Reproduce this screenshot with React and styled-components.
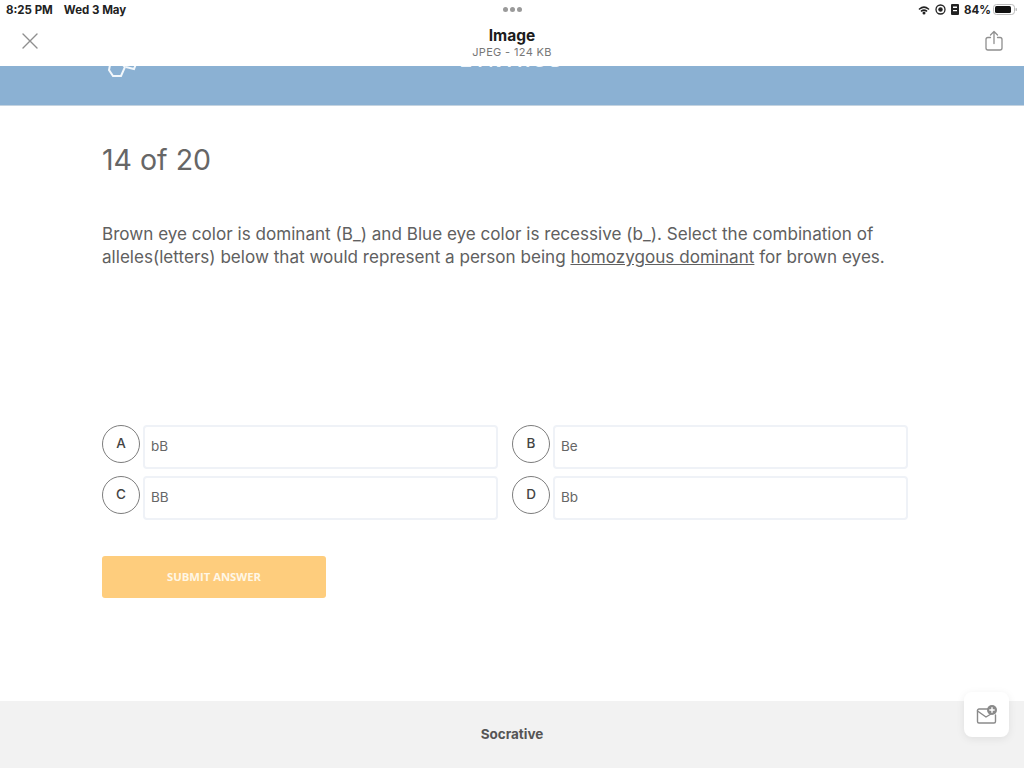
import React from "react";
import styled, { createGlobalStyle } from "styled-components";

const Global = createGlobalStyle`
  html, body { margin: 0; padding: 0; background: #fff; }
  body { font-family: "Liberation Sans", Arial, sans-serif; }
  * { box-sizing: border-box; }
`;
const Page = styled.div`
  width: 1024px; height: 768px; overflow: hidden; position: relative;
  display: flex; flex-direction: column; background: #fff;
`;
const TopChrome = styled.header`
  height: 66px; flex: none; display: flex; flex-direction: column; background: #fff;
`;
const StatusBar = styled.div`
  height: 19px; display: grid; grid-template-columns: 1fr auto 1fr; align-items: center;
  padding: 0 6px; font-size: 11.5px; font-weight: 700; color: #222;
  font-family: Inter, "Liberation Sans", sans-serif;
`;
const StatusLeft = styled.div`display: flex; gap: 11px; white-space: nowrap;`;
const StatusRight = styled.div`
  display: flex; justify-content: flex-end; align-items: center; gap: 5px;
`;
const Dots = styled.div`display: flex; gap: 2px;`;
const Dot = styled.span`width: 5px; height: 5px; border-radius: 50%; background: #9a9a9a;`;
const NavBar = styled.div`
  flex: 1; display: flex; align-items: center; justify-content: space-between; padding: 0 21px 4px 21px;
`;
const NavTitle = styled.div`
  display: flex; flex-direction: column; align-items: center; margin-top: 4px;
`;
const TitleMain = styled.div`
  font: 700 15.5px/18px Inter, "Liberation Sans", sans-serif; color: #1c1c1c;
`;
const TitleSub = styled.div`
  font: 400 11px/14px Inter, "Liberation Sans", sans-serif; color: #777; letter-spacing: .35px;
`;
const Banner = styled.div`
  height: 40px; flex: none; background: #8bb1d3; position: relative; overflow: hidden;
  border-bottom: 1px solid #c4d3e0;
`;
const BannerLogo = styled.svg`position: absolute; left: 107px; top: -5px;`;
const BannerText = styled.div`
  position: absolute; left: 0; right: 0; top: -15px; text-align: center; color: #eef5fb;
  font: 700 18px/20px "Liberation Sans", sans-serif; letter-spacing: 2.4px;
`;
const Main = styled.main`flex: 1; padding: 36px 116px 0 102px; display: flex; flex-direction: column;`;
const Count = styled.h1`
  margin: 0; font: 400 28.5px/36px Inter, "Liberation Sans", sans-serif; color: #666;
`;
const Question = styled.p`
  margin: 44px 0 0; width: 800px; font: 400 17.1px/23px Inter, "Liberation Sans", sans-serif; color: #606060;
`;
const Answers = styled.div`
  margin-top: 157px; display: grid; grid-template-columns: 396px 396px; column-gap: 14px; row-gap: 7px;
`;
const Answer = styled.div`display: flex; gap: 3px; align-items: flex-start;`;
const Letter = styled.div`
  width: 38px; height: 38px; flex: none; border: 1.5px solid #7d7d7d; border-radius: 50%;
  display: flex; align-items: center; justify-content: center;
  font: 500 13.5px/1 Inter, "Liberation Sans", sans-serif; color: #444;
`;
const AnswerBox = styled.div`
  flex: 1; height: 44px; border: 2px solid #eff2f7; border-radius: 4px; background: #fff;
  display: flex; align-items: center; padding: 0 6px;
  font: 400 13.5px/1 Inter, "Liberation Sans", sans-serif; color: #666;
`;
const Submit = styled.button`
  margin-top: 36px; width: 224px; height: 42px; border: 0; border-radius: 3px; background: #fecd7d;
  color: #fff7e6; font: 700 11.3px/1 "Open Sans", "Liberation Sans", sans-serif;
  padding: 0;
`;
const Footer = styled.footer`
  height: 67px; flex: none; background: #f2f2f2; display: flex; align-items: center; justify-content: center;
  font: 700 13.5px/1 Inter, "Liberation Sans", sans-serif; color: #555;
`;
const FloatButton = styled.div`
  position: absolute; left: 964px; top: 692px; width: 45px; height: 45px; border-radius: 8px; background: #fff;
  box-shadow: 0 2px 8px rgba(0,0,0,.08); display: flex; align-items: center; justify-content: center;
`;

export default function App() {
  return (
    <Page>
      <Global />
      <TopChrome>
        <StatusBar>
          <StatusLeft><span>8:25 PM</span><span>Wed 3 May</span></StatusLeft>
          <Dots><Dot /><Dot /><Dot /></Dots>
          <StatusRight>
            <svg width="12" height="10" viewBox="0 0 12 10" fill="none" stroke="#222" strokeWidth="1.6" strokeLinecap="round">
              <path d="M1.5 4C4.300 1.700 7.700 1.700 10.500 4" />
              <path d="M3.500 6C5 4.900 7 4.900 8.500 6" />
              <circle cx="6" cy="8" r=".7" fill="#222" />
            </svg>
            <svg width="11" height="11" viewBox="0 0 11 11" fill="none" stroke="#222" strokeWidth="1.3">
              <circle cx="5.500" cy="5.500" r="4.500" />
              <circle cx="5.500" cy="5.500" r="1.600" fill="#222" />
            </svg>
            <svg width="8" height="11" viewBox="0 0 8 11">
              <rect x="0" y="0" width="8" height="11" rx="1" fill="#222" />
              <rect x="2" y="2.500" width="4" height="1.500" fill="#fff" />
              <rect x="2" y="6" width="4" height="1.200" fill="#fff" />
            </svg>
            <span>84%</span>
            <svg width="25" height="11" viewBox="0 0 25 11" style={{ marginLeft: -3 }}>
              <rect x=".5" y=".5" width="21" height="10" rx="3" fill="none" stroke="#bbb" />
              <rect x="2" y="2" width="16" height="7" rx="1.500" fill="#111" />
              <rect x="22.500" y="4" width="1.500" height="3" rx=".7" fill="#bbb" />
            </svg>
          </StatusRight>
        </StatusBar>
        <NavBar>
          <svg width="18" height="18" viewBox="0 0 18 18" fill="none" stroke="#8f8f8f" strokeWidth="1.4" strokeLinecap="round">
            <path d="M2 2L16 16M16 2L2 16" />
          </svg>
          <NavTitle>
            <TitleMain>Image</TitleMain>
            <TitleSub>JPEG - 124 KB</TitleSub>
          </NavTitle>
          <svg width="18" height="21" viewBox="0 0 18 21" fill="none" stroke="#8f8f8f" strokeWidth="1.3" strokeLinecap="round" strokeLinejoin="round">
            <path d="M5.500 7.500H3A2 2 0 0 0 1 9.500V18A2 2 0 0 0 3 20H15A2 2 0 0 0 17 18V9.500A2 2 0 0 0 15 7.500H12.500" />
            <path d="M9 13.500V1.500M5.500 5L9 1.500L12.500 5" />
          </svg>
        </NavBar>
      </TopChrome>
      <Banner>
        <BannerText>ZYNTHOS</BannerText>
        <BannerLogo width="32" height="18" viewBox="0 0 32 18" fill="none" stroke="#f2f7fb" strokeWidth="2">
          <path d="M3 4L7 1H13L18 6L14 15H6L2 9Z" />
          <path d="M19 6L27 8L29 3" />
        </BannerLogo>
      </Banner>
      <Main>
        <Count>14 of 20</Count>
        <Question>
          Brown eye color is dominant (B_) and Blue eye color is recessive (b_). Select the combination of alleles(letters) below that would represent a person being <u>homozygous dominant</u> for brown eyes.
        </Question>
        <Answers>
          <Answer><Letter>A</Letter><AnswerBox>bB</AnswerBox></Answer>
          <Answer><Letter>B</Letter><AnswerBox>Be</AnswerBox></Answer>
          <Answer><Letter>C</Letter><AnswerBox>BB</AnswerBox></Answer>
          <Answer><Letter>D</Letter><AnswerBox>Bb</AnswerBox></Answer>
        </Answers>
        <div><Submit>SUBMIT ANSWER</Submit></div>
      </Main>
      <Footer>Socrative</Footer>
      <FloatButton>
        <svg width="22" height="20" viewBox="0 0 22 20" fill="none" stroke="#8a8a8a" strokeWidth="1.400" strokeLinecap="round" strokeLinejoin="round">
          <path d="M14 4H3A1.500 1.500 0 0 0 1.500 5.500V16.500A1.500 1.500 0 0 0 3 18H18A1.500 1.500 0 0 0 19.500 16.500V10" />
          <path d="M1.500 6L10 12L15 9" />
          <circle cx="16" cy="5" r="5" fill="#8a8a8a" stroke="none" />
          <path d="M16 2.800V7.200M13.800 5H18.200" stroke="#fff" />
        </svg>
      </FloatButton>
    </Page>
  );
}
